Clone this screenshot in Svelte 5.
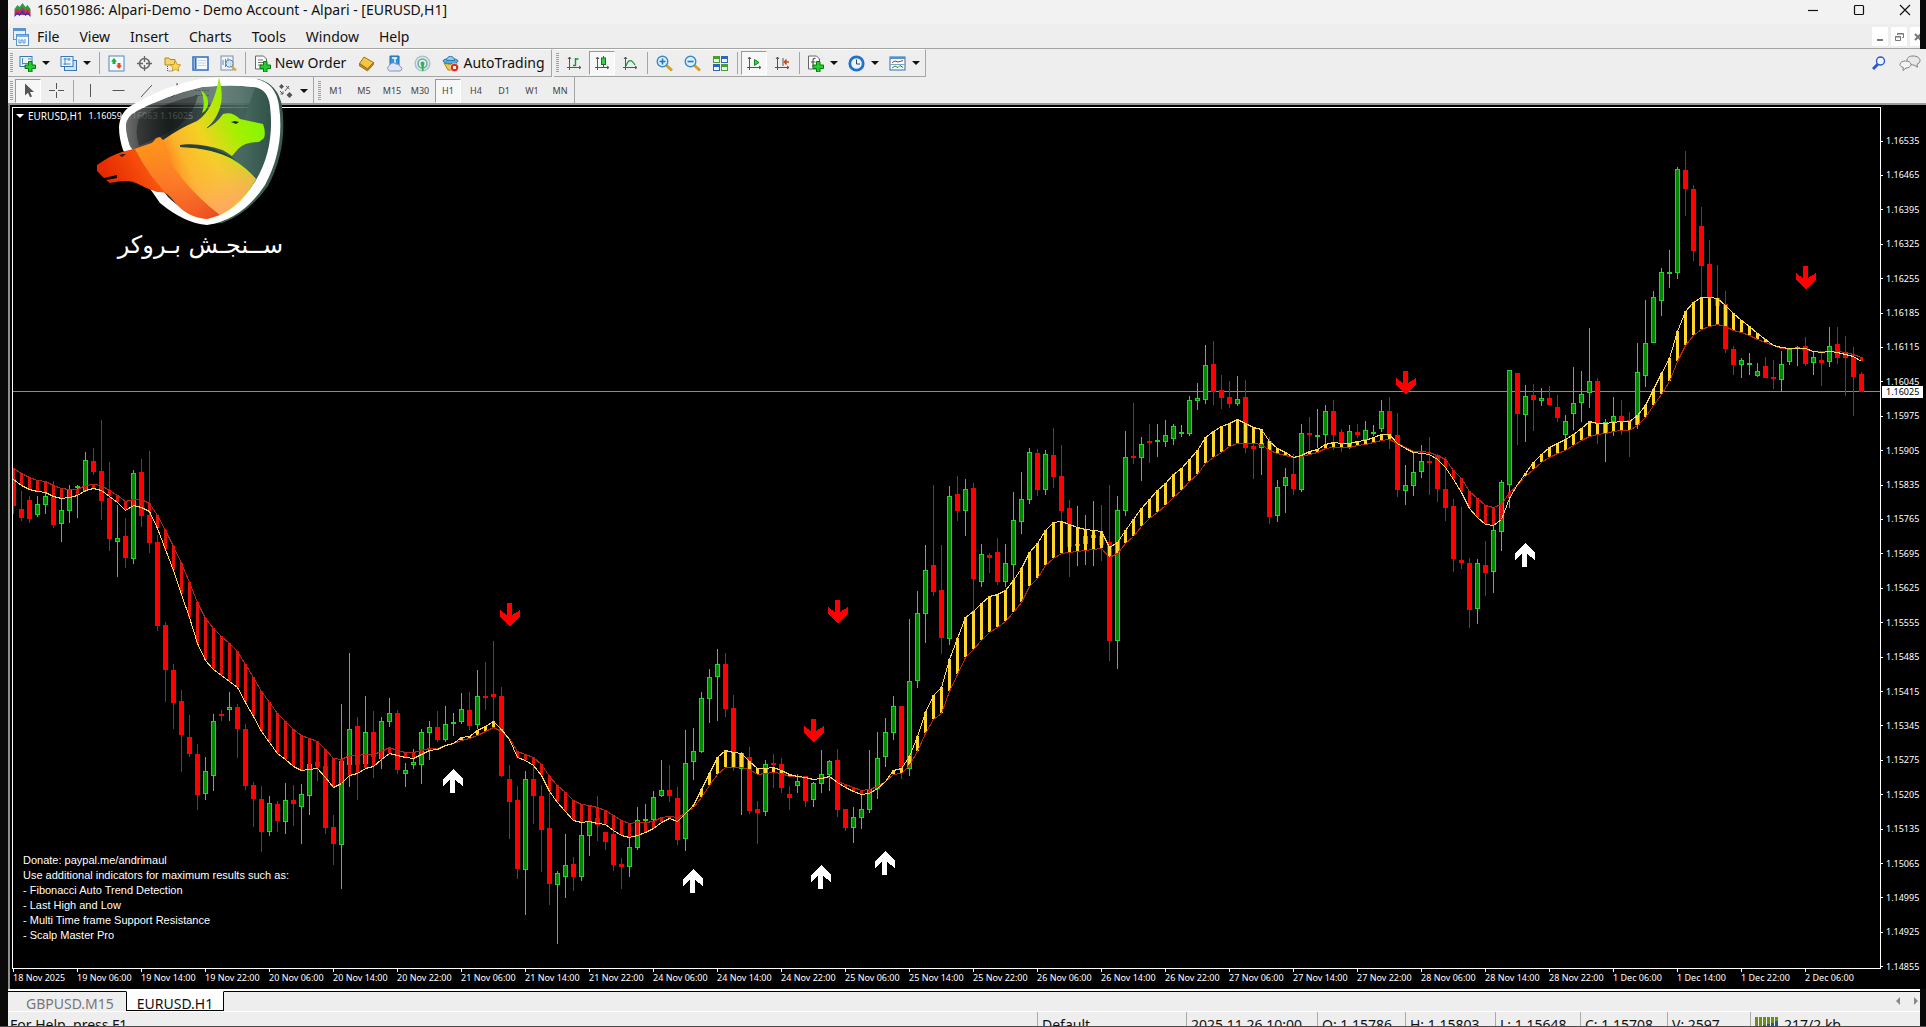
<script>
  // One row per bar: direction, high, body top, body bottom, low, fast average, slow average
  const source = `r 479 479 506 514 479 468;r 491 509 518 521 485 473;r 496 500 519 523 489 477;g 496 504 515 517 491 480
g 492 496 505 514 492 481;r 481 497 525 528 496 485;g 498 510 524 542 498 488;g 485 489 511 523 497 489
g 485 486 488 518 495 489;g 452 460 491 492 490 485;r 448 461 472 475 488 484;r 420 471 501 520 490 485
r 462 498 539 551 496 490;g 505 538 542 577 502 495;r 518 536 558 568 510 501;g 470 473 559 564 505 499
r 459 472 516 527 507 499;r 451 515 543 553 511 503;r 535 542 626 631 528 515;r 622 625 670 702 549 530
r 664 670 703 729 570 546;r 690 701 735 772 594 563;r 715 737 754 757 617 582;r 744 754 795 810 643 602
g 757 771 794 800 660 618;g 714 721 776 791 669 628;r 710 714 716 721 675 636;g 692 707 710 721 681 643
r 704 707 729 758 687 651;r 724 729 786 790 702 664;r 782 785 799 827 716 677;r 786 799 832 852 731 691
g 796 803 832 836 742 702;r 801 804 821 832 753 713;g 783 800 822 834 759 721;r 785 800 804 826 766 729
g 784 794 807 844 770 735;g 763 764 796 815 769 738;r 760 762 766 781 768 741;r 766 766 828 834 777 749
r 815 827 844 865 787 758;g 704 761 845 889 783 759;g 653 729 765 787 775 755;r 717 726 765 800 773 755
g 696 732 764 767 768 754;r 711 732 757 778 766 754;g 717 721 759 769 759 751;g 698 713 722 727 753 747
r 710 713 770 774 755 750;g 763 770 774 787 757 752;g 749 762 765 769 758 752;g 729 732 765 784 754 750
g 721 727 733 760 750 748;r 711 727 740 742 749 748;g 706 724 740 742 745 745;g 713 722 724 736 743 743
g 693 709 722 724 737 740;r 692 710 726 730 736 738;g 670 696 725 729 730 735;r 662 696 698 710 726 731
r 641 694 697 724 721 727;r 687 696 776 777 729 731;r 765 779 802 839 739 738;r 786 800 869 879 757 751
g 771 779 870 915 760 754;r 759 779 796 824 765 757;r 785 796 830 872 775 764;r 775 828 884 905 791 776
g 871 873 885 944 802 785;g 834 865 877 898 811 792;r 857 864 877 891 820 800;g 822 835 877 881 822 804
g 814 821 836 856 821 805;r 796 818 825 841 823 807;r 832 832 842 850 824 810;r 830 834 865 871 830 815
r 858 864 867 889 835 820;g 837 847 867 877 837 823;g 807 820 848 850 835 822;g 804 819 821 823 832 822
g 791 797 820 822 828 821;g 760 790 796 797 822 817;r 765 790 796 802 818 816;r 787 798 840 845 821 817
g 730 763 839 851 813 813;g 728 751 762 780 805 807;g 692 698 752 753 789 797;g 669 677 699 723 773 785
g 649 664 677 721 757 774;r 653 664 709 717 750 767;r 695 708 767 771 752 767;g 752 753 769 815 753 767
r 747 757 811 814 761 769;r 801 809 813 844 768 774;g 760 764 812 816 768 773;r 754 763 765 788 767 772
r 758 764 788 793 770 773;r 786 794 798 810 774 776;g 774 781 786 793 776 776;r 776 776 801 807 777 778
g 782 783 800 807 779 779;g 750 774 784 793 778 778;g 760 761 775 791 776 777;r 749 760 810 817 782 781
r 809 809 828 831 787 784;g 807 817 828 843 791 787;g 794 809 818 829 794 790;g 750 789 810 813 793 789
g 732 758 789 799 788 786;g 718 732 757 767 781 781;g 696 706 733 740 770 774;r 706 706 767 779 768 773
g 619 681 769 776 756 765;g 591 613 681 688 736 751;g 545 570 614 643 712 733;r 485 565 592 596 695 719
r 545 590 638 654 687 713;g 486 496 639 645 659 691;r 476 494 511 521 638 674;g 479 489 511 536 617 657
r 483 488 579 611 611 649;g 544 554 582 587 603 640;r 553 555 558 573 596 632;r 538 552 582 585 594 627
g 544 563 582 587 590 621;g 492 520 565 580 580 612;g 472 499 522 534 568 602;g 448 452 500 504 552 586
r 449 453 490 496 543 578;g 450 454 490 495 530 565;r 428 455 477 488 522 558;r 445 476 511 524 521 553
r 500 508 547 577 524 552;g 506 544 546 566 527 551;g 515 536 544 565 529 550;g 501 535 538 566 530 549
r 505 536 545 561 531 548;r 485 542 641 661 547 557;g 496 510 641 669 542 553;g 431 457 511 516 530 543
r 403 456 458 464 519 536;g 437 444 458 481 508 526;r 424 441 443 463 499 518;g 424 440 442 457 490 512
g 420 435 442 447 483 505;g 424 426 439 445 474 497;g 425 432 434 437 468 490;g 396 400 434 436 459 481
g 383 398 401 410 450 474;g 345 365 400 404 437 463;r 341 364 392 405 431 457;r 375 390 398 409 426 452
r 381 397 404 408 423 446;g 376 399 404 406 419 443;r 380 397 448 453 423 443;r 444 446 449 479 427 443
g 441 443 448 475 429 444;r 437 441 517 524 441 450;g 480 487 516 522 448 453;g 468 477 486 513 452 455
r 454 474 489 495 457 457;g 424 433 490 492 455 456;r 417 433 435 450 451 454;g 409 435 437 448 449 452
g 405 411 435 445 444 448;r 400 411 435 450 442 447;r 429 432 443 452 443 447;g 425 431 448 449 443 447
r 424 432 435 438 441 445;g 421 430 440 441 440 444;g 425 432 434 436 437 442;g 400 411 429 432 434 440
r 397 411 437 449 434 439;r 413 435 490 497 443 443;g 465 485 491 505 448 447;g 453 472 486 496 452 451
g 445 461 472 478 453 451;r 437 461 463 495 454 452;r 454 455 489 502 459 455;r 457 489 508 521 467 459
r 499 506 559 572 479 470;r 507 560 563 569 492 478;r 558 563 610 628 508 491;g 559 563 609 624 517 498
r 541 565 573 596 524 505;g 525 530 572 593 525 507;g 480 482 532 551 519 504;g 370 370 485 508 498 492
r 373 373 414 445 484 485;g 385 396 415 442 473 476;r 384 395 400 431 462 469;g 388 398 401 406 454 462
r 386 398 405 405 447 457;r 395 407 418 422 443 453;g 415 421 435 439 439 450;g 367 403 414 430 434 445
g 371 394 403 422 428 440;g 328 381 393 408 421 436;r 378 381 423 444 423 434;g 419 422 433 462 423 433
g 397 416 422 436 422 431;r 400 416 422 435 421 430;r 412 420 422 457 421 430;g 343 372 425 429 415 425
g 300 343 376 387 405 417;g 291 297 343 343 389 405;g 268 272 301 316 373 394;g 250 272 274 288 358 381
g 167 169 273 279 331 361;r 151 170 189 216 311 345;r 185 189 251 261 302 335;r 207 226 266 297 297 329
r 240 264 298 300 297 326;r 265 298 306 308 298 324;r 291 304 349 353 305 326;r 346 349 365 375 313 330
g 358 360 365 378 320 332;g 353 363 365 375 326 335;g 363 371 376 377 333 339;r 357 366 378 378 339 342
r 360 377 379 389 345 345;g 351 364 380 391 347 348;g 348 349 362 365 348 348;g 346 347 349 366 348 348
r 337 346 364 366 348 349;g 352 357 363 375 351 351;r 351 360 363 386 352 351;g 327 346 362 367 351 351
r 327 344 358 364 352 351;r 336 353 358 396 354 352;r 347 357 377 416 356 354;r 372 374 392 392 361 357`;

  const bars = source.split(/[;\n]/).map((row, i) => {
    const [dir, ...n] = row.trim().split(' ');
    const [high, top, bottom, low, fast, slow] = n.map(Number);
    return { x: 13 + i * 8, up: dir === 'g', high, top, bottom, low, fast, slow };
  });
  const line = (key) => bars.map((b) => `${b.x + 0.5},${b[key] + 0.5}`).join(' ');
  const fastLine = line('fast');
  const slowLine = line('slow');

  const sells = [[510, 603], [814, 719], [838, 600], [1406, 371], [1806, 266]];
  const buys = [[453, 769], [693, 869], [821, 865], [885, 851], [1525, 543]];

  const prices = Array.from({ length: 25 }, (_, i) => (1.16535 - i * 0.0007).toFixed(5));
  const current = 1.16025;
  const currentTop = ((1.16535 - current) / 0.0168) * 100;

  const days = ['19 Nov', '20 Nov', '21 Nov', '24 Nov', '25 Nov', '26 Nov', '27 Nov', '28 Nov', '1 Dec'];
  const times = ['18 Nov 2025', ...days.flatMap((d) => ['06:00', '14:00', '22:00'].map((h) => `${d} ${h}`)), '2 Dec 06:00'];

  const menus = ['File', 'View', 'Insert', 'Charts', 'Tools', 'Window', 'Help'];
  const frames = ['M1', 'M5', 'M15', 'M30', 'H1', 'H4', 'D1', 'W1', 'MN'];
  const notes = [
    'Donate: paypal.me/andrimaul',
    'Use additional indicators for maximum results such as:',
    '- Fibonacci Auto Trend Detection',
    '- Last High and Low',
    '- Multi Time frame Support Resistance',
    '- Scalp Master Pro'
  ];
  const quote = [
    ['date', '2025.11.26 10:00'],
    ['open', 'O: 1.15786'],
    ['high', 'H: 1.15803'],
    ['low', 'L: 1.15648'],
    ['close', 'C: 1.15708'],
    ['volume', 'V: 2597']
  ];
  let frame = $state('H1');
</script>

{#snippet plus()}
  <path d="M10.5 7.500h3.500v3.500h3.500v3.500h-3.500v3.500h-3.500v-3.500h-3.500v-3.500h3.500z" transform="translate(-1 -1)" fill="#1fd12b" stroke="#067a12" />
{/snippet}

{#snippet axes()}
  <path d="M3.500 2v13M1 12.500h14M2 4l1.500-2L5 4M13 11l2 1.500-2 1.500" fill="none" stroke="#555" />
{/snippet}

{#snippet icon(name)}
  <svg class="icon" viewBox="0 0 17 17" aria-hidden="true">
    {#if name === 'newchart'}
      <rect x="1" y="1.500" width="12" height="10" fill="#eaf4ff" stroke="#3c78b4" />
      <path d="M3.500 3v6.500M3 8.500h8M9 4h3" stroke="#4d88c0" fill="none" />
      {@render plus()}
    {:else if name === 'profiles'}
      <rect x="4.500" y="5.500" width="12" height="10" fill="#cfe4f8" stroke="#3c78b4" />
      <rect x="1" y="1.500" width="12" height="10" fill="#eaf4ff" stroke="#3c78b4" />
      <path d="M3.500 4h7M3.500 9h7M5 3v7M9 3v3" stroke="#4d88c0" fill="none" />
    {:else if name === 'market'}
      <rect x="1" y="1" width="15" height="15" fill="#f4faff" stroke="#4a88c4" />
      <path d="M6 3l3 3.500H7.500V9h-3V6.500H3z" fill="#20b030" />
      <path d="M11 14l3-3.500h-1.500V8h-3v2.500H8z" fill="#e04a20" />
    {:else if name === 'target'}
      <circle cx="8.500" cy="8.500" r="5" fill="none" stroke="#666" stroke-width="1.500" />
      <path d="M8.500 1v6M8.500 10v6M1 8.500h6M10 8.500h6" stroke="#666" stroke-width="1.300" />
    {:else if name === 'navigator'}
      <path d="M1 3h4l1 1.500h5V10H1z" fill="#f6d666" stroke="#b08820" />
      <path d="M3.500 11v5h5" stroke="#555" fill="none" stroke-dasharray="1 1" />
      <path d="M11.500 6l1.700 3.400 3.600.5-2.700 2.500.7 3.700-3.300-1.800-3.300 1.800.7-3.700-2.600-2.500 3.600-.5z" fill="#fbd94c" stroke="#c08a10" stroke-width=".8" />
    {:else if name === 'terminal'}
      <rect x="1" y="2" width="15" height="13" fill="#f4f8ff" stroke="#2c6cc0" stroke-width="1.500" />
      <path d="M3.500 3v11" stroke="#2c6cc0" stroke-width="2" />
      <path d="M6 5.500h8M6 8h8M6 10.500h8" stroke="#c8d6e8" />
    {:else if name === 'tester'}
      <rect x="1" y="1" width="12" height="14" fill="#eef4fa" stroke="#7a8fa4" />
      <path d="M3 10V5M5.500 12V4M8 9V3M10.500 11V5" stroke="#5f8ab0" />
      <circle cx="9.500" cy="8.500" r="3.700" fill="#cfe6f8" fill-opacity=".8" stroke="#5a88b0" />
      <path d="M12 11.500l4 4" stroke="#dba63a" stroke-width="2.400" />
    {:else if name === 'order'}
      <path d="M1.500 1h8l3 3v10h-11z" fill="#fbfbfb" stroke="#666" />
      <path d="M4 5h5M4 7.500h6M4 10h4" stroke="#777" />
      {@render plus()}
    {:else if name === 'book'}
      <path d="M1.500 8.500L6 2l9.500 5.500L9.500 14z" fill="#f2c648" stroke="#a8720c" />
      <path d="M1.500 8.500v2.500L9.500 16l6-6.500V7.500L9.500 14z" fill="#c98a1c" stroke="#8f5f0a" stroke-width=".7" />
    {:else if name === 'community'}
      <path d="M4 1h9v9H4z" fill="#2f95e0" stroke="#1f6cb0" />
      <path d="M6 3h5M9 3v5" stroke="#fff" stroke-width="1.300" />
      <path d="M3.500 16a3 3 0 0 1 0-5.500 4 4 0 0 1 6.500-1.500 3.500 3.500 0 0 1 4 2.500 2.300 2.300 0 0 1 0 4.500z" fill="#dde6f4" stroke="#8496b8" />
    {:else if name === 'signals'}
      <circle cx="8.500" cy="8.500" r="7.300" fill="#e4f0ee" stroke="#a4c4c8" stroke-width="1.500" />
      <circle cx="8.500" cy="8.500" r="4.500" fill="none" stroke="#6aa4a8" stroke-width="1.500" />
      <path d="M6.500 8.500a2 2 0 1 1 4 0c0 1-.9 1.500-.9 7.500H8c0-6-1.500-6-1.500-7.500z" fill="#36b050" />
    {:else if name === 'auto'}
      <path d="M2 8l6.500 1.500L15 8l-3 7H6z" fill="#f2c648" stroke="#b08018" />
      <ellipse cx="8.500" cy="6" rx="7.500" ry="2.500" fill="#5eb0e4" stroke="#2d78b0" />
      <path d="M4.500 5.500C4.500 0 12.500 0 12.500 5.500z" fill="#8accf2" stroke="#2d78b0" />
      <circle cx="12.500" cy="12.500" r="4.200" fill="#e0301c" stroke="#fff" stroke-width=".6" />
      <rect x="11" y="11" width="3" height="3" fill="#fff" />
    {:else if name === 'bars'}
      {@render axes()}
      <path d="M9.500 3v8M9.500 4h3M7 10.500h2.500" stroke="#129a28" stroke-width="1.400" fill="none" />
    {:else if name === 'candles'}
      {@render axes()}
      <path d="M9.500 1v11" stroke="#0c7a1c" />
      <rect x="7.500" y="3" width="4" height="6.500" fill="#35d24a" stroke="#0c7a1c" />
    {:else if name === 'line'}
      {@render axes()}
      <path d="M4 11c2-6 5-8 9-1" stroke="#1c9a30" stroke-width="1.300" fill="none" />
    {:else if name === 'zoomin' || name === 'zoomout'}
      <path d="M10.500 10.500l5.500 5" stroke="#d8a020" stroke-width="3" />
      <circle cx="6.500" cy="6.500" r="5.300" fill="#d8effc" stroke="#3a8ac8" stroke-width="1.400" />
      <path d={name === 'zoomin' ? 'M3.500 6.500h6M6.500 3.500v6' : 'M3.500 6.500h6'} stroke="#2476b8" stroke-width="1.600" />
    {:else if name === 'tile'}
      <path d="M1 1h7v7H1zM9 9h7v7H9z" fill="#45a024" /><path d="M9 1h7v7H9zM1 9h7v7H1z" fill="#2a66c4" />
      <path d="M2 4h5v3H2zM10 4h5v3h-5zM2 12h5v3H2zM10 12h5v3h-5z" fill="#f2f8ff" />
    {:else if name === 'scroll'}
      {@render axes()}
      <path d="M8.500 4.500l4.500 3-4.500 3z" fill="#35d24a" stroke="#0c8a1c" />
    {:else if name === 'shift'}
      {@render axes()}
      <path d="M9 3v8" stroke="#555" /><path d="M15 7h-4M12.500 4.500L10.500 7l2 2.500" stroke="#c04818" stroke-width="1.500" fill="none" />
    {:else if name === 'indicators'}
      <path d="M1.500 1h8l3 3v10h-11z" fill="#fbfbfb" stroke="#666" />
      <path d="M8.500 3.500C6 3 6 4.500 6 6v6M4 7h4.500" stroke="#555" fill="none" stroke-width="1.200" />
      {@render plus()}
    {:else if name === 'clock'}
      <circle cx="8.500" cy="8.500" r="6.700" fill="#eaf5ff" stroke="#2272cc" stroke-width="2.800" />
      <path d="M8.500 4.500v4.500h3.500" stroke="#345" fill="none" />
    {:else if name === 'template'}
      <rect x="1" y="2" width="15" height="13" fill="#fafdff" stroke="#2c6ca8" />
      <path d="M1 3h15" stroke="#4a94d8" stroke-width="2" />
      <path d="M3 7.500l3-1.500 3 1 5-1.500" stroke="#a03a20" fill="none" /><path d="M3 13l3-2 3 1.500 2-2 3 2" stroke="#1c8a30" fill="none" />
      <path d="M1 9.500h15" stroke="#7aa4c8" />
    {:else if name === 'cursor'}
      <path d="M5 1.500v12l3-2.700 2 4.500 2-.9-2-4.400h4z" fill="#555" />
    {:else if name === 'cross'}
      <path d="M8.500 1v6M8.500 10v6M1 8.500h6M10 8.500h6" stroke="#555" />
    {:else if name === 'vline'}
      <path d="M8.500 2v13" stroke="#555" />
    {:else if name === 'hline'}
      <path d="M2.500 8.500h12" stroke="#555" />
    {:else if name === 'trend'}
      <path d="M3 15L14 3" stroke="#555" />
    {:else if name === 'channel'}
      <path d="M2 12L12 2M6 15L16 5M11 1v8" stroke="#555" fill="none" />
    {:else if name === 'fibo'}
      <path d="M1 3.500h15M1 8.500h15M1 13.500h15" stroke="#555" stroke-dasharray="2 1" />
    {:else if name === 'shapes'}
      <path d="M4.500 2L7 4.500 4.500 7 2 4.500zM12.500 10l3 3-3 3-3-3z" fill="#555" />
      <path d="M3 9l3 3M6 12V9.500M6 12H3.500M8 9l4-5M9 4l3.500 3" stroke="#555" fill="none" />
    {/if}
  </svg>
{/snippet}

{#snippet tool(name, label, active = false)}
  <button class="tool" class:active aria-label={label}>{@render icon(name)}</button>
{/snippet}

{#snippet drop(name, label)}
  <button class="tool drop" aria-label={label}>{@render icon(name)}<i class="caret"></i></button>
{/snippet}

<div class="desktop">
  <header class="window-head">
    <div class="titlebar">
      <svg class="appicon" viewBox="0 0 16 14" aria-hidden="true">
        <path d="M0 6l3-4 2 2 3-4 3 4 2-2 3 4v3H0z" fill="#2e9a4a" />
        <path d="M0 9l3-3 2 2 3-4 3 4 2-2 3 3v3H0z" fill="#d02848" />
        <path d="M0 12l3-3 2 2 3-4 3 4 2-2 3 3v2l-3-3-2 2-3-3-3 3-2-2-3 3z" fill="#3038b0" />
      </svg>
      <h1>16501986: Alpari-Demo - Demo Account - Alpari - [EURUSD,H1]</h1>
      <div class="winctl">
        <button aria-label="Minimize"><svg viewBox="0 0 12 12"><path d="M1 6.500h10" /></svg></button>
        <button aria-label="Maximize"><svg viewBox="0 0 12 12"><rect x="1.500" y="1.500" width="9" height="9" rx="1" /></svg></button>
        <button aria-label="Close"><svg viewBox="0 0 12 12"><path d="M1 1l10 10M11 1L1 11" /></svg></button>
      </div>
    </div>
    <nav class="menubar">
      <svg class="docicon" viewBox="0 0 16 18" aria-hidden="true">
        <rect x=".500" y=".500" width="12" height="11" fill="#e4f0fc" stroke="#5a94d0" />
        <path d="M1 2h11" stroke="#5a94d0" stroke-width="2" />
        <rect x="3.500" y="6.500" width="12" height="11" fill="#f2f8ff" stroke="#5a94d0" />
        <path d="M4 8h11" stroke="#7ab0e4" stroke-width="2" /><path d="M6 11v4h2v-3h2v3h2v-4" stroke="#5a94d0" fill="none" />
      </svg>
      {#each menus as m}<button class="menu">{m}</button>{/each}
      <div class="mdi">
        <button aria-label="Minimize chart"><svg viewBox="0 0 10 10"><path d="M2 8h6" stroke-width="2" /></svg></button>
        <button aria-label="Restore chart"><svg viewBox="0 0 10 10"><path d="M3.500 3V1.500h6v4H8M1.500 4.500h5v4h-5zM3 2h6M1 5h6" /></svg></button>
        <button class="cut" aria-label="Close chart"><svg viewBox="0 0 10 10"><path d="M2 2l6 6M8 2L2 8" stroke-width="2" /></svg></button>
      </div>
    </nav>
  </header>

  <div class="toolbars">
    <div class="row upper">
      <div class="bar">
        <span class="grip"></span>
        {@render drop('newchart', 'New chart')}
        {@render drop('profiles', 'Profiles')}
        <span class="sep"></span>
        {@render tool('market', 'Market Watch')}
        {@render tool('target', 'Data Window')}
        {@render tool('navigator', 'Navigator')}
        {@render tool('terminal', 'Terminal')}
        {@render tool('tester', 'Strategy Tester')}
        <span class="sep"></span>
        <button class="tool wide order">{@render icon('order')}New Order</button>
        {@render tool('book', 'MetaEditor')}
        {@render tool('community', 'Community')}
        {@render tool('signals', 'Signals')}
        <button class="tool wide auto">{@render icon('auto')}AutoTrading</button>
      </div>
      <div class="bar">
        <span class="grip"></span>
        {@render tool('bars', 'Bar chart')}
        {@render tool('candles', 'Candlesticks', true)}
        {@render tool('line', 'Line chart')}
        <span class="sep"></span>
        {@render tool('zoomin', 'Zoom in')}
        {@render tool('zoomout', 'Zoom out')}
        {@render tool('tile', 'Tile windows')}
        <span class="sep"></span>
        {@render tool('scroll', 'Auto scroll', true)}
        {@render tool('shift', 'Chart shift')}
        <span class="sep"></span>
        {@render drop('indicators', 'Indicators')}
        {@render drop('clock', 'Periods')}
        {@render drop('template', 'Templates')}
      </div>
      <div class="extras">
        <button aria-label="Search">
          <svg viewBox="0 0 14 14" width="14" height="14"><path d="M1 13l5-5" stroke="#2a58d0" stroke-width="3" /><circle cx="8.500" cy="5" r="4" fill="#eef4ff" stroke="#2a58d0" stroke-width="1.400" /></svg>
        </button>
        <button aria-label="Messages">
          <svg viewBox="0 0 22 16" width="22" height="16"><path d="M14 1c4 0 7 1.800 7 4.500 0 2-1.500 3.200-3 3.700l.5 3L15 10c-4 0-7-1.800-7-4.500S10 1 14 1z" fill="#e8e8e8" stroke="#808080" /><path d="M6.500 6C9.500 6 12 7.500 12 9.500S9.500 13 7 13l-3 2.500.3-3C2.500 12 1 11 1 9.500 1 7.500 3.500 6 6.500 6z" fill="#f4f4f4" stroke="#808080" /></svg>
        </button>
      </div>
    </div>
    <div class="row lower">
      <div class="bar">
        <span class="grip"></span>
        {@render tool('cursor', 'Cursor', true)}
        {@render tool('cross', 'Crosshair')}
        <span class="sep"></span>
        {@render tool('vline', 'Vertical line')}
        {@render tool('hline', 'Horizontal line')}
        {@render tool('trend', 'Trendline')}
        {@render tool('channel', 'Channel')}
        {@render tool('fibo', 'Fibonacci')}
        <button class="tool" aria-label="Text"></button>
        <button class="tool" aria-label="Text label"></button>
        {@render drop('shapes', 'Arrows')}
      </div>
      <div class="bar">
        <span class="grip"></span>
        {#each frames as f}
          <button class="tool frame" class:active={frame === f} onclick={() => (frame = f)}>{f}</button>
        {/each}
      </div>
    </div>
  </div>

  <main class="chart">
    <section class="plot">
      <svg class="canvas" viewBox="13 108 1867 860" preserveAspectRatio="none" role="img" aria-label="EURUSD H1 candlestick chart">
        <rect x="13" y="391" width="1867" height="1" fill="#8c8c8c" />
        {#each bars as b}
          <rect x={b.x} y={b.high} width="1" height={b.low - b.high} fill={b.up ? '#3ad03e' : '#a8201c'} />
          <rect x={b.x - 2} y={b.top} width="5" height={Math.max(b.bottom - b.top, 2)} fill={b.up ? '#22d626' : '#ff0000'} />
          {#if b.up && b.bottom - b.top > 2}
            <rect x={b.x - 1} y={b.top + 1} width="3" height={b.bottom - b.top - 2} fill="#008a00" />
          {/if}
        {/each}
        {#each bars as b}
          {#if Math.abs(b.fast - b.slow) > 1}
            <rect x={b.x - 1} y={Math.min(b.fast, b.slow)} width="3" height={Math.abs(b.fast - b.slow)} fill={b.fast < b.slow ? '#ffd628' : '#e4100c'} />
          {/if}
        {/each}
        <polyline points={slowLine} fill="none" stroke="#b82818" />
        <polyline points={fastLine} fill="none" stroke="#f8d860" />
        {#each sells as [x, y]}
          <path d="M-3 0H2V12L10 7V14L0 23L-10 14V7L-3 12z" transform="translate({x} {y})" fill="#ff0000" />
        {/each}
        {#each buys as [x, y]}
          <path d="M-3 24H2V11L10 17V10L0 0L-10 10V17L-3 11z" transform="translate({x} {y})" fill="#fff" />
        {/each}
      </svg>
      <p class="ohlc"><i class="caret"></i><span class="symbol">EURUSD,H1</span>1.16059 1.16063 1.16025</p>
      <ul class="notes">
        {#each notes as n}<li>{n}</li>{/each}
      </ul>
    </section>
    <aside class="prices">
      <div class="scale">
        {#each prices as p}<span>{p}</span>{/each}
        <div class="marker"><b style="top: {currentTop}%">{current}</b></div>
      </div>
    </aside>
    <div class="times">
      {#each times as t}<span>{t}</span>{/each}
    </div>
  </main>

  <footer>
    <div class="tabs">
      <button class="tab">GBPUSD.M15</button>
      <button class="tab current">EURUSD.H1</button>
      <span class="arrows"><i class="prev"></i><i class="next"></i></span>
    </div>
    <div class="status">
      <span class="help">For Help, press F1</span>
      <span class="profile">Default</span>
      {#each quote as [kind, text]}<span class={kind}>{text}</span>{/each}
      <span class="traffic">
        <svg viewBox="0 0 24 16" width="24" height="16" aria-hidden="true">
          <path d="M1.500 0v15M5.500 0v15M9.500 0v15M13.500 0v15M17.500 0v15M21.500 0v15" stroke="#6b8e1c" stroke-width="3" />
          <path d="M5.500 9v7M9.500 8v8M13.500 7v9M17.500 6v10M21.500 4v12" stroke="#1a5c8c" stroke-width="3" />
        </svg>217/2 kb
      </span>
    </div>
  </footer>

  <div class="brand">
    <svg viewBox="95 75 192 152" aria-hidden="true">
      <defs>
        <linearGradient id="glass" x1="0" y1="0" x2="1" y2="0">
          <stop offset="0" stop-color="#777" /><stop offset=".3" stop-color="#2e3534" stop-opacity=".8" /><stop offset=".6" stop-color="#4e6a64" stop-opacity=".9" /><stop offset=".8" stop-color="#4a6a62" /><stop offset="1" stop-color="#2f5248" />
        </linearGradient>
        <linearGradient id="hide" gradientUnits="userSpaceOnUse" x1="97" y1="200" x2="262" y2="115">
          <stop offset=".1" stop-color="#e62a00" /><stop offset=".36" stop-color="#fb5a10" /><stop offset=".52" stop-color="#fbb52c" />
          <stop offset=".66" stop-color="#f2d222" /><stop offset=".84" stop-color="#a4f000" /><stop offset="1" stop-color="#80f800" />
        </linearGradient>
        <linearGradient id="chest" gradientUnits="userSpaceOnUse" x1="150" y1="140" x2="212" y2="218">
          <stop offset="0" stop-color="#ff9c1c" stop-opacity=".9" /><stop offset=".5" stop-color="#fb7a2c" stop-opacity=".8" /><stop offset="1" stop-color="#ee4c20" />
        </linearGradient>
        <linearGradient id="shine" gradientUnits="userSpaceOnUse" x1="185" y1="145" x2="225" y2="215">
          <stop offset="0" stop-color="#ffd028" stop-opacity="0" /><stop offset="1" stop-color="#ffa070" stop-opacity=".9" />
        </linearGradient>
      </defs>
      <path d="M258 79Q278 84 282 106Q288 148 268 186Q248 214 222 223L207 224Z" fill="#3a5a50" />
      <path d="M126 125Q127 116 137 111Q167 95 202 87Q232 84 254 87Q268 89 270 106Q275 148 256 180Q236 213 207 218Q188 216 168 197L130 146Q126 134 126 125z" fill="url(#glass)" fill-opacity=".9" />
      <path d="M139 118Q165 102 198 95Q195 112 177 128L155 139L139 146Q134 132 139 118z" fill="#0c0f0f" opacity=".4" />
      <path fill-rule="evenodd" d="M119 127Q120 110 136 103Q165 86 200 79Q232 75 256 79Q276 83 279 106Q285 148 265 185Q242 220 207 225Q184 223 160 203L123 150Q119 138 119 127zM126 125Q127 116 137 111Q167 95 202 87Q232 84 254 87Q268 89 270 106Q275 148 256 180Q236 213 207 218Q188 216 168 197L130 146Q126 134 126 125z" fill="#fff" />
      <path d="M219 77Q225 98 218 113Q214 122 207 128Q216 124 223 114Q232 111 240 119L263 124Q266 132 264 138L259 142Q245 142 238 149L232 156Q222 148 207 146Q193 143 180 145L180 147Q212 147 232 159Q247 168 256 179Q238 213 207 219Q186 217 174 201Q169 191 157 192Q147 189 136 183Q128 179 110 183L106 180L117 178V175L104 178L97 171V165Q111 155 122 152Q138 148 152 143L156 138L160 137L163 140Q180 128 197 121Q214 110 219 77z" fill="url(#hide)" />
      <path d="M135 149L152 143L160 138Q172 178 220 215L207 219Q186 217 174 201Q150 179 135 149z" fill="url(#chest)" />
      <path d="M158 139Q180 139 212 151L243 168L256 179Q243 201 220 215Q177 181 158 139z" fill="url(#shine)" />
      <path d="M201 90Q209 96 208 105Q207 110 202 113Q206 103 201 90z" fill="#8cf000" />
      <path d="M207 128Q217 121 219 112" fill="none" stroke="#3a5a34" />
      <path d="M180 145Q212 143 237 161Q213 148 180 147z" fill="#24433a" />
      <path d="M231 122l5 2 3-2-4-1zM119 155l3 2 4-3-3 0z" fill="#222" />
    </svg>
    <strong lang="fa" dir="rtl">ســنجـش بـروکر</strong>
  </div>
</div>

<style>
  :global(body) { margin: 0; background: #000; overflow: hidden; }
  .desktop {
    position: relative; display: flex; flex-direction: column; height: 100vh; box-sizing: border-box;
    padding-left: 8px; border-bottom: 1px solid #4a4a4a; background: #0a0a0a; overflow: hidden;
    font: 14px/20px 'Noto Sans', 'Open Sans', sans-serif; color: #111;
  }
  button { font: inherit; color: inherit; background: none; border: 0; padding: 0; margin: 0; }
  h1, p, ul { margin: 0; padding: 0; font: inherit; list-style: none; }

  .window-head { margin-right: 6px; }
  .titlebar { display: flex; align-items: center; height: 24px; padding: 0 4px 4px 6px; box-sizing: border-box; background: #f2f2f2; }
  .appicon { width: 17px; height: 14px; margin-right: 6px; }
  h1 { flex: 1; white-space: nowrap; }
  .winctl { display: flex; }
  .winctl button { width: 46px; height: 20px; display: grid; place-items: center; }
  .winctl button:last-child { width: 23px; margin-left: 11px; }
  .winctl svg { width: 12px; height: 12px; fill: none; stroke: #111; stroke-width: 1.2; }
  .menubar { display: flex; align-items: center; height: 25px; box-sizing: border-box; padding: 1px 0 0 5px; background: #eee; border-bottom: 1px solid #a3a5a1; }
  .docicon { width: 16px; height: 18px; margin-right: 8px; }
  .menu { margin-right: 20px; }
  .mdi { display: flex; gap: 3px; margin-left: auto; }
  .mdi button { width: 16px; height: 19px; display: grid; place-items: center; background: #fff; }
  .mdi .cut { width: 10px; overflow: hidden; justify-content: start; padding-left: 3px; }
  .mdi svg { width: 10px; height: 10px; fill: none; stroke: #777; }

  .toolbars { background: #eee; border-bottom: 2px solid #9a9a9a; }
  .row { display: flex; height: 26px; }
  .upper { height: 28px; }
  .bar { display: flex; align-items: center; border-right: 1px solid #a5a5a5; margin-right: 2px; }
  .upper .bar { border-bottom: 1px solid #a5a5a5; border-top: 1px solid #fff; }
  .lower .bar { padding-top: 1px; }
  .grip { width: 3px; height: 20px; margin: 0 1px 0 2px; background: repeating-linear-gradient(#a0a0a0 0 1px, #eee 1px 2px); }
  .tool { display: flex; align-items: center; justify-content: center; box-sizing: border-box; width: 28px; height: 24px; }
  .icon { width: 17px; height: 17px; flex: none; }
  .active { border: 1px solid #fff; border-top-color: #999; border-left-color: #999; background: #f7f7f7; width: 26px; margin: 0 1px; }
  .drop { width: 41px; justify-content: flex-start; padding-left: 5px; gap: 6px; }
  .caret { width: 0; border: 4px solid transparent; border-top-color: #111; border-bottom: 0; }
  .sep { width: 1px; height: 22px; margin: 0 2px 0 3px; background: #a5a5a5; }
  .wide { gap: 4px; white-space: nowrap; }
  .order { width: 104px; }
  .auto { width: 115px; }
  .frame { font-size: 9px; color: #444; }
  .extras { display: flex; align-items: center; gap: 13px; margin-left: auto; padding-right: 5px; }
  .extras button { display: flex; }
  .extras svg { fill: none; }

  .chart {
    flex: 1; min-height: 0; display: grid; grid-template: minmax(0, 1fr) 20px / minmax(0, 1fr) 45px;
    padding: 2px 0 0 2px; border-left: 2px solid #8e8e8e; background: #000; color: #fff; font-size: 9px; line-height: 12px;
  }
  .plot { position: relative; border: 1px solid #fff; min-height: 0; }
  .canvas { display: block; width: 100%; height: 100%; shape-rendering: crispEdges; }
  .ohlc { position: absolute; left: 3px; top: 2px; display: flex; align-items: center; white-space: pre; }
  .ohlc .caret { border-top-color: #fff; margin-right: 4px; }
  .symbol { font-size: 10px; margin-right: 6px; }
  .notes { position: absolute; left: 10px; bottom: 25px; font: 11px/15px 'Liberation Sans', Arial, sans-serif; }
  .prices { position: relative; display: flex; }
  .scale { position: relative; flex: 1; display: flex; flex-direction: column; justify-content: space-between; margin: 28px 0 -4px; }
  .scale span { display: flex; align-items: center; gap: 3px; height: 12px; }
  .scale span::before { content: ''; width: 2px; height: 1px; background: #fff; }
  .marker { position: absolute; inset: 6px 0; }
  .marker b { position: absolute; left: 1px; width: 37px; margin-top: -6px; padding-left: 4px; height: 12px; background: #fff; color: #000; font-weight: 400; }
  .times { display: grid; grid-template-columns: repeat(29, minmax(0, 1fr)); margin: 0 12px 0 1px; }
  .times span { white-space: nowrap; text-indent: -1px; }
  .times span::before { content: ''; display: block; width: 1px; height: 3px; background: #fff; }

  footer { margin-right: 6px; background: #eee; }
  .tabs { display: flex; height: 20px; border-top: 2px solid #fff; border-bottom: 1px solid #fff; align-items: flex-start; }
  .tab { height: 20px; padding: 2px 12px 0 18px; color: #777; box-sizing: border-box; border-top: 1px solid #000; line-height: 19px; }
  .current { color: #111; background: #fff; border: 1px solid #000; border-top-color: #fff; padding: 2px 10px 0; }
  .arrows { flex: 1; display: flex; justify-content: flex-end; gap: 14px; height: 13px; padding-right: 2px; border-top: 1px solid #000; align-items: flex-end; }
  .prev, .next { border: 4px solid transparent; }
  .prev { border-right-color: #888; border-left: 0; }
  .next { border-left-color: #888; border-right: 0; }
  .status { display: flex; height: 14px; overflow: hidden; }
  .status span { box-sizing: border-box; height: 30px; line-height: 25px; padding-left: 4px; border-left: 1px solid #aaa; white-space: nowrap; }
  .status .help { flex: 1; padding-left: 2px; border: 0; }
  .profile { width: 149px; }
  .date { width: 131px; }
  .open { width: 88px; }
  .high { width: 90px; }
  .low { width: 85px; }
  .close { width: 87px; }
  .volume { width: 83px; }
  .traffic { width: 170px; display: flex; gap: 5px; }
  .traffic svg { margin-top: 5px; }

  .brand { position: absolute; left: 95px; top: 75px; width: 192px; pointer-events: none; }
  .brand svg { display: block; width: 192px; height: 152px; }
  .brand strong { display: block; margin: 0 4px 0 24px; text-align: center; white-space: nowrap; color: #fff; font: 24px/36px 'DejaVu Sans', sans-serif; }
</style>
